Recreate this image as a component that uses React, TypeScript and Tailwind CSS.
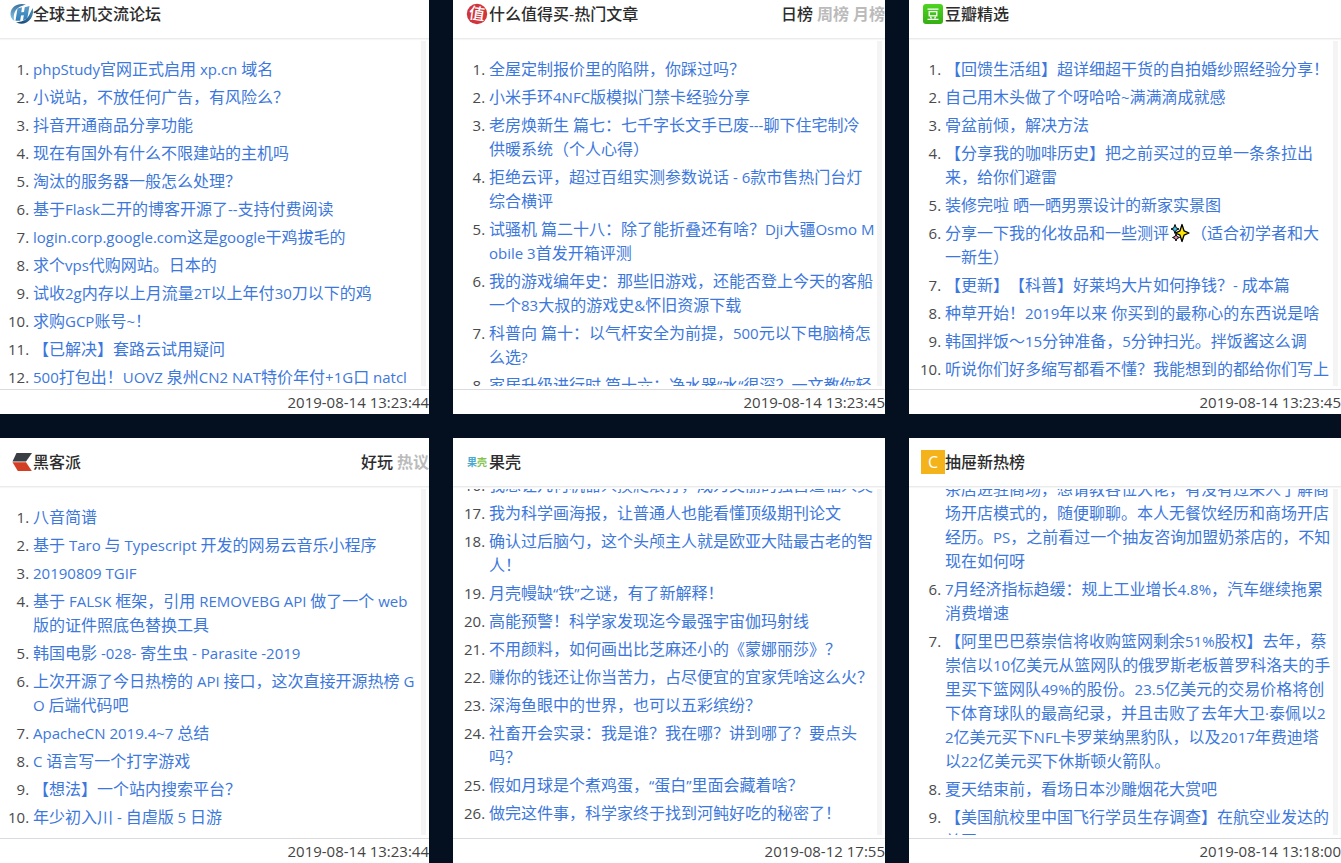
import { Fragment, useLayoutEffect, useRef, useState } from "react";
import type { ReactNode } from "react";

type Board = {
  name: string;
  icon: ReactNode;
  tabs?: string[];
  start?: number;
  continued?: boolean;
  scroll?: number;
  items: string[];
  updated: string;
};

function HostlocIcon() {
  return (
    <svg viewBox="0 0 24 24" className="h-6 w-6" aria-hidden="true">
      <defs>
        <linearGradient id="loc-left" x1="0" y1="0" x2="0" y2="1">
          <stop offset="0" stopColor="#3a6f9c" />
          <stop offset="1" stopColor="#8ccbe8" />
        </linearGradient>
        <linearGradient id="loc-right" x1="1" y1="0" x2="0" y2="1">
          <stop offset="0" stopColor="#4b93c4" />
          <stop offset="1" stopColor="#0f3a69" />
        </linearGradient>
        <linearGradient id="loc-h" x1="0" y1="0" x2="0" y2="1">
          <stop offset="0" stopColor="#5d9cc6" />
          <stop offset="1" stopColor="#2f7fbb" />
        </linearGradient>
      </defs>
      <path d="M17 2.500C9 0.500 2 4.500 1.500 11.500C1.300 15 3 17.500 5.500 19C4 14 5 8 10.500 5C12.500 4 14.500 3.300 17 2.500Z" fill="url(#loc-left)" />
      <path d="M23.800 6C25 12 22.500 18 17.500 20.500C14 22.300 9.500 22 7 20.300C12 20 16.500 18.500 19 15C21 12 21.800 9 23.800 6Z" fill="url(#loc-right)" />
      <path d="M8.500 6.500L13 5.200L12.300 10.200L15 9.900L15.700 5.200L20.500 4L18.300 16.500L14 18.500L14.800 13.200L12 13.500L11.200 18.800L6.500 18.800Z" fill="url(#loc-h)" />
    </svg>
  );
}

function SmzdmIcon() {
  return (
    <svg viewBox="0 0 24 24" className="h-6 w-6" aria-hidden="true">
      <circle cx="12" cy="12" r="10.200" fill="#d2343c" />
      <text x="12" y="17.500" textAnchor="middle" fontSize="16" fontWeight="500" fill="#fff" transform="rotate(8 12 12)" fontFamily="'Noto Sans CJK SC', sans-serif">
        值
      </text>
    </svg>
  );
}

function DoubanIcon() {
  return (
    <svg viewBox="0 0 24 24" className="h-6 w-6" aria-hidden="true">
      <defs>
        <linearGradient id="douban" x1="0" y1="0" x2="0" y2="1">
          <stop offset="0" stopColor="#4fd421" />
          <stop offset="1" stopColor="#35ae13" />
        </linearGradient>
      </defs>
      <rect x="2" y="2" width="20" height="20" rx="3" fill="url(#douban)" />
      <path d="M6.500 7.200H17.500M6.500 17.300H17.500M9.500 14.500L10.300 16.500M14.500 14.500L13.700 16.500" stroke="#fff" strokeWidth="1.300" fill="none" />
      <rect x="8.200" y="9.600" width="7.600" height="4.200" stroke="#fff" strokeWidth="1.300" fill="none" />
    </svg>
  );
}

function HacpaiIcon() {
  return (
    <svg viewBox="0 0 24 24" className="h-6 w-6" aria-hidden="true">
      <path d="M7.500 3H23L17 11.500H3.500Z" fill="#3b3e43" />
      <path d="M3.500 12.300H17L22.800 21H8.800Z" fill="#d23f25" />
    </svg>
  );
}

function GuokrIcon() {
  return (
    <svg viewBox="0 0 24 24" className="h-6 w-6" aria-hidden="true" fontFamily="'Noto Sans CJK SC', sans-serif" fontSize="10" fontWeight="700">
      <text x="2" y="16" fill="#4aaad2">果</text>
      <text x="12" y="16" fill="#85c24a">壳</text>
    </svg>
  );
}

function ChoutiIcon() {
  return (
    <span aria-hidden="true" className="flex h-6 w-6 items-center justify-center bg-[#f4b31a] text-base leading-6 font-normal text-white">
      C
    </span>
  );
}

function Sparkles() {
  return (
    <svg viewBox="0 0 22 20" role="img" aria-label="✨" className="inline-block h-5 w-[22px] align-[-4px]">
      <path d="M6 1.500L7.200 4.800L10 6L7.200 7.200L6 10.500L4.800 7.200L2 6L4.800 4.800Z" fill="#3fc4e8" stroke="#000" strokeWidth="1" />
      <path d="M7 11L8 13.500L10.500 14.500L8 15.500L7 18L6 15.500L3.500 14.500L6 13.500Z" fill="#f08cc0" stroke="#000" strokeWidth="1" />
      <path d="M13 1.500L15 7.800L20 10L15 12.200L13 18.500L11 12.200L6.500 10L11 7.800Z" fill="#ffe600" stroke="#000" strokeWidth="1.300" strokeLinejoin="round" />
    </svg>
  );
}

// Latin runs are set one pixel smaller so they balance with the CJK glyphs.
function MixedText({ text }: { text: string }) {
  const runs = text.split(/([\x20-\x7e“”·]+|✨)/);
  return (
    <>
      {runs.map((run, i) => {
        if (i % 2 === 0) return <Fragment key={i}>{run}</Fragment>;
        if (run === "✨") return <Sparkles key={i} />;
        return (
          <span key={i} className="text-[15px]">
            {run}
          </span>
        );
      })}
    </>
  );
}

const boards: Board[] = [
  {
    name: "全球主机交流论坛",
    icon: <HostlocIcon />,
    items: [
      "phpStudy官网正式启用 xp.cn 域名",
      "小说站，不放任何广告，有风险么？",
      "抖音开通商品分享功能",
      "现在有国外有什么不限建站的主机吗",
      "淘汰的服务器一般怎么处理？",
      "基于Flask二开的博客开源了--支持付费阅读",
      "login.corp.google.com这是google干鸡拔毛的",
      "求个vps代购网站。日本的",
      "试收2g内存以上月流量2T以上年付30刀以下的鸡",
      "求购GCP账号~！",
      "【已解决】套路云试用疑问",
      "500打包出！UOVZ 泉州CN2 NAT特价年付+1G口 natcl",
    ],
    updated: "2019-08-14 13:23:44",
  },
  {
    name: "什么值得买-热门文章",
    icon: <SmzdmIcon />,
    tabs: ["日榜", "周榜", "月榜"],
    items: [
      "全屋定制报价里的陷阱，你踩过吗？",
      "小米手环4NFC版模拟门禁卡经验分享",
      "老房焕新生 篇七：七千字长文手已废---聊下住宅制冷供暖系统（个人心得）",
      "拒绝云评，超过百组实测参数说话 - 6款市售热门台灯综合横评",
      "试骚机 篇二十八：除了能折叠还有啥？Dji大疆Osmo Mobile 3首发开箱评测",
      "我的游戏编年史：那些旧游戏，还能否登上今天的客船一个83大叔的游戏史&怀旧资源下载",
      "科普向 篇十：以气杆安全为前提，500元以下电脑椅怎么选?",
      "家居升级进行时 篇十六：净水器“水“很深？一文教你轻",
    ],
    updated: "2019-08-14 13:23:45",
  },
  {
    name: "豆瓣精选",
    icon: <DoubanIcon />,
    items: [
      "【回馈生活组】超详细超干货的自拍婚纱照经验分享！",
      "自己用木头做了个呀哈哈~满满滴成就感",
      "骨盆前倾，解决方法",
      "【分享我的咖啡历史】把之前买过的豆单一条条拉出来，给你们避雷",
      "装修完啦 晒一晒男票设计的新家实景图",
      "分享一下我的化妆品和一些测评✨（适合初学者和大一新生）",
      "【更新】【科普】好莱坞大片如何挣钱？- 成本篇",
      "种草开始！2019年以来 你买到的最称心的东西说是啥",
      "韩国拌饭～15分钟准备，5分钟扫光。拌饭酱这么调",
      "听说你们好多缩写都看不懂？我能想到的都给你们写上",
    ],
    updated: "2019-08-14 13:23:45",
  },
  {
    name: "黑客派",
    icon: <HacpaiIcon />,
    tabs: ["好玩", "热议"],
    items: [
      "八音简谱",
      "基于 Taro 与 Typescript 开发的网易云音乐小程序",
      "20190809 TGIF",
      "基于 FALSK 框架，引用 REMOVEBG API 做了一个 web 版的证件照底色替换工具",
      "韩国电影 -028- 寄生虫 - Parasite -2019",
      "上次开源了今日热榜的 API 接口，这次直接开源热榜 GO 后端代码吧",
      "ApacheCN 2019.4~7 总结",
      "C 语言写一个打字游戏",
      "【想法】一个站内搜索平台？",
      "年少初入川 - 自虐版 5 日游",
    ],
    updated: "2019-08-14 13:23:44",
  },
  {
    name: "果壳",
    icon: <GuokrIcon />,
    start: 16,
    scroll: 32,
    items: [
      "我想让几何机器人摸爬滚打，成为美丽的独自造福人类",
      "我为科学画海报，让普通人也能看懂顶级期刊论文",
      "确认过后脑勺，这个头颅主人就是欧亚大陆最古老的智人！",
      "月壳幔缺“铁”之谜，有了新解释！",
      "高能预警！科学家发现迄今最强宇宙伽玛射线",
      "不用颜料，如何画出比芝麻还小的《蒙娜丽莎》？",
      "赚你的钱还让你当苦力，占尽便宜的宜家凭啥这么火？",
      "深海鱼眼中的世界，也可以五彩缤纷？",
      "社畜开会实录：我是谁？我在哪？讲到哪了？要点头吗？",
      "假如月球是个煮鸡蛋，“蛋白”里面会藏着啥？",
      "做完这件事，科学家终于找到河鲀好吃的秘密了！",
    ],
    updated: "2019-08-12 17:55",
  },
  {
    name: "抽屉新热榜",
    icon: <ChoutiIcon />,
    start: 5,
    continued: true,
    scroll: 28,
    items: [
      "茶店进驻商场，想请教各位大佬，有没有过来人了解商场开店模式的，随便聊聊。本人无餐饮经历和商场开店经历。PS，之前看过一个抽友咨询加盟奶茶店的，不知现在如何呀",
      "7月经济指标趋缓：规上工业增长4.8%，汽车继续拖累消费增速",
      "【阿里巴巴蔡崇信将收购篮网剩余51%股权】去年，蔡崇信以10亿美元从篮网队的俄罗斯老板普罗科洛夫的手里买下篮网队49%的股份。23.5亿美元的交易价格将创下体育球队的最高纪录，并且击败了去年大卫·泰佩以22亿美元买下NFL卡罗莱纳黑豹队，以及2017年费迪塔以22亿美元买下休斯顿火箭队。",
      "夏天结束前，看场日本沙雕烟花大赏吧",
      "【美国航校里中国飞行学员生存调查】在航空业发达的美国",
    ],
    updated: "2019-08-14 13:18:00",
  },
];

function BoardCard({ board }: { board: Board }) {
  const viewport = useRef<HTMLDivElement>(null);
  const [tab, setTab] = useState(0);

  useLayoutEffect(() => {
    if (viewport.current) viewport.current.scrollTop = board.scroll ?? 0;
  }, [board.scroll]);

  return (
    <section className="flex min-h-0 min-w-0 flex-col bg-white">
      <header className="flex h-12 shrink-0 items-center justify-between pl-3 text-base font-medium text-[#2c2c2c]">
        <div className="flex items-center">
          {board.icon}
          <h2>{board.name}</h2>
        </div>
        {board.tabs && (
          <nav className="flex gap-1">
            {board.tabs.map((label, i) => (
              <button
                key={label}
                type="button"
                onClick={() => setTab(i)}
                className={i === tab ? "text-[#2c2c2c]" : "font-bold text-[#bbbbbb]"}
              >
                {label}
              </button>
            ))}
          </nav>
        )}
      </header>
      <div className="flex min-h-0 flex-1 border-t border-[#ebebeb] pt-0.5 pr-[3px] pb-[3px] shadow-[inset_0_1px_1px_#f6f6f6]">
        <div ref={viewport} className="min-w-0 flex-1 overflow-y-auto [scrollbar-width:none]">
          <ol
            start={board.start}
            className="flex list-decimal flex-col gap-1 py-4 pr-0.5 pl-9 text-base leading-6 break-all text-[#4a4a4a] [text-spacing-trim:space-all]"
          >
            {board.items.map((item, i) => (
              <li key={item} className={board.continued && i === 0 ? "list-none" : "marker:text-[15px]"}>
                <a href="#" className="text-[#3c78dc]">
                  <MixedText text={item} />
                </a>
              </li>
            ))}
          </ol>
        </div>
        <div className="w-[5px] shrink-0 bg-[#f4f4f4]" />
      </div>
      <footer className="flex h-[25px] shrink-0 items-center justify-end border-t border-[#d9dbde] text-[15px] text-[#444444]">
        <time>{board.updated}</time>
      </footer>
    </section>
  );
}

export default function App() {
  return (
    <main className="h-screen overflow-hidden bg-[#04101f] font-['Open_Sans','Noto_Sans_CJK_SC',sans-serif]" lang="zh-CN">
      <div className="-mt-2.5 -ml-[3px] grid grid-cols-3 grid-rows-[424px_425px] gap-6">
        {boards.map((board) => (
          <BoardCard key={board.name} board={board} />
        ))}
      </div>
    </main>
  );
}
